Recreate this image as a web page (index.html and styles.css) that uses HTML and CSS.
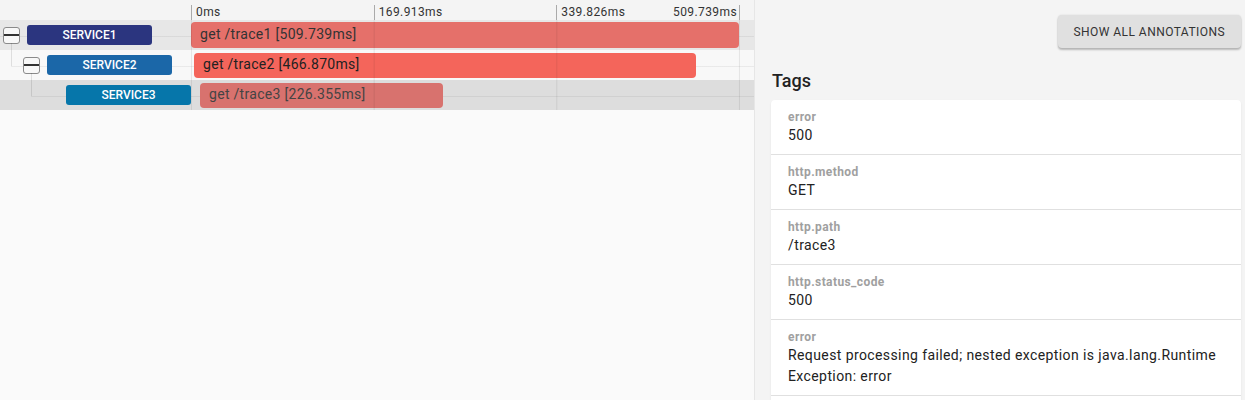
FILE: index.html
```html
<!DOCTYPE html>
<html lang="en">
<head>
  <meta charset="UTF-8" />
  <meta name="viewport" content="width=device-width, initial-scale=1.0"/>
  <title>Trace Detail</title>
  <link rel="stylesheet" href="styles.css">
</head>
<body>

  <div class="layout">

    <section class="timeline">
      <div class="ruler">
        <div class="ruler-space"></div>
        <div class="ruler-ticks">
          <div class="tick"><span>0ms</span></div>
          <div class="tick"><span>169.913ms</span></div>
          <div class="tick"><span>339.826ms</span><span>509.739ms</span></div>
        </div>
      </div>

      <div class="span-row row-selected depth-0">
        <div class="span-label">
          <span class="toggle has-children"></span>
          <span class="service service-1">SERVICE1</span>
        </div>
        <div class="span-track">
          <div class="span-bar bar-1" style="margin-left:0px;width:548px">get /trace1 [509.739ms]</div>
        </div>
      </div>

      <div class="span-row row-light depth-1">
        <div class="span-label">
          <span class="toggle has-children"></span>
          <span class="service service-2">SERVICE2</span>
        </div>
        <div class="span-track">
          <div class="span-bar bar-2" style="margin-left:3px;width:502px">get /trace2 [466.870ms]</div>
        </div>
      </div>

      <div class="span-row row-dark depth-2">
        <div class="span-label">
          <span class="toggle toggle-empty"></span>
          <span class="service service-3">SERVICE3</span>
        </div>
        <div class="span-track">
          <div class="span-bar bar-3" style="margin-left:9px;width:243px">get /trace3 [226.355ms]</div>
        </div>
      </div>
    </section>

    <aside class="detail">
      <div class="detail-actions">
        <button class="btn-annotations">Show all annotations</button>
      </div>

      <h3>Tags</h3>

      <div class="tag-card">
        <div class="tag-item">
          <div class="tag-key">error</div>
          <div class="tag-value">500</div>
        </div>
        <div class="tag-item">
          <div class="tag-key">http.method</div>
          <div class="tag-value">GET</div>
        </div>
        <div class="tag-item">
          <div class="tag-key">http.path</div>
          <div class="tag-value">/trace3</div>
        </div>
        <div class="tag-item">
          <div class="tag-key">http.status_code</div>
          <div class="tag-value">500</div>
        </div>
        <div class="tag-item">
          <div class="tag-key">error</div>
          <div class="tag-value">Request processing failed; nested exception is java.lang.RuntimeException: error</div>
        </div>
      </div>
    </aside>

  </div>

</body>
</html>
```

FILE: styles.css
```css
body {
  margin: 0;
  font-family: Roboto, 'Liberation Sans', Arial, sans-serif;
  color: #222;
  background: #f4f4f4;
  height: 400px;
  overflow: hidden;
}

.layout {
  display: flex;
  height: 400px;
}

/* ---- timeline ---- */

.timeline {
  width: 754px;
  flex-shrink: 0;
  background: #fafafa;
  border-right: 1px solid #e6e6e6;
}

.ruler {
  display: flex;
  height: 20px;
  padding-top: 5px;
  box-sizing: border-box;
  background: #f4f4f4;
}

.ruler-space {
  width: 191px;
  flex-shrink: 0;
}

.ruler-ticks {
  display: grid;
  grid-template-columns: repeat(3, 1fr);
  width: 548px;
  border-right: 1px solid #aaa;
}

.tick {
  display: flex;
  justify-content: space-between;
  border-left: 1px solid #aaa;
  padding: 0 2px 0 4px;
  font-size: 12px;
  letter-spacing: 0.4px;
  line-height: 15px;
  color: #333;
}

.span-row {
  display: flex;
  height: 30px;
  background-repeat: no-repeat;
  background-size: 100% 1px;
  background-image: linear-gradient(rgba(0, 0, 0, 0.06), rgba(0, 0, 0, 0.06));
}

.row-selected { background-color: #e7e7e7; }
.row-light { background-color: #f8f8f8; }
.row-dark { background-color: #dddddd; }

.depth-0 { background-position: 0 16px; }
.depth-1 { background-position: 11px 16px; }
.depth-2 { background-position: 31px 16px; }

.span-label {
  display: flex;
  align-items: center;
  gap: 7px;
  width: 191px;
  flex-shrink: 0;
  box-sizing: border-box;
}

.depth-0 .span-label { padding-left: 3px; }
.depth-1 .span-label { padding-left: 23px; }
.depth-2 .span-label { padding-left: 42px; }

.toggle {
  position: relative;
  width: 17px;
  height: 17px;
  box-sizing: border-box;
  border: 1px solid #8a8a8a;
  border-radius: 3px;
  background: linear-gradient(#333, #333) center / 100% 2px no-repeat, #f8f8f8;
}

.toggle.has-children::after {
  content: '';
  position: absolute;
  left: 7px;
  top: 100%;
  width: 1px;
  height: 23px;
  background: rgba(0, 0, 0, 0.1);
}

.toggle-empty {
  visibility: hidden;
}

.service {
  width: 125px;
  height: 20px;
  border-radius: 3px;
  color: #fff;
  font-size: 12px;
  font-weight: 500;
  line-height: 20px;
  text-align: center;
}

.service-1 { background: #2b357f; }
.service-2 { background: #1b67a8; }
.service-3 { background: #0676aa; }

.span-track {
  position: relative;
  width: 549px;
  flex-shrink: 0;
}

.span-track::after {
  content: '';
  position: absolute;
  top: 0;
  left: 0;
  right: 0;
  bottom: 0;
  pointer-events: none;
  background: linear-gradient(to right, rgba(0, 0, 0, 0.08) 1px, transparent 1px) 0 0 / 182.667px 100% repeat-x;
}

.span-bar {
  height: 26px;
  margin-top: 2px;
  border-radius: 4px;
  padding-left: 9px;
  box-sizing: border-box;
  font-size: 14px;
  letter-spacing: 0.3px;
  line-height: 25px;
  color: #333;
  white-space: nowrap;
  overflow: hidden;
}

.depth-1 .span-bar,
.depth-2 .span-bar {
  margin-top: 3px;
  height: 25px;
  line-height: 23px;
}

.bar-1 { background: #e5706a; }
.bar-2 { background: #f4655b; color: #222; }
.bar-3 { background: #d8726e; color: #444; }

/* ---- detail panel ---- */

.detail {
  flex: 1;
  padding: 15px 4px 0 16px;
  background: #f4f4f4;
}

.detail-actions {
  display: flex;
  justify-content: flex-end;
}

.btn-annotations {
  height: 33px;
  padding: 0 16px;
  border: none;
  border-radius: 4px;
  background: #e0e0e0;
  box-shadow: 0 2px 2px rgba(0, 0, 0, 0.24), 0 0 2px rgba(0, 0, 0, 0.12);
  font-family: Roboto, 'Liberation Sans', Arial, sans-serif;
  font-size: 12px;
  letter-spacing: 0.45px;
  text-transform: uppercase;
  color: #333;
  cursor: pointer;
}

h3 {
  margin: 21px 0 7px 1px;
  font-size: 18px;
  font-weight: 500;
  line-height: 24px;
  color: #222;
}

.tag-card {
  padding-bottom: 12px;
  background: #fff;
  border-radius: 4px;
  box-shadow: 0 1px 2px rgba(0, 0, 0, 0.08);
}

.tag-item {
  padding: 9px 18px 8px 17px;
  border-bottom: 1px solid #e0e0e0;
}

.tag-key {
  font-size: 12px;
  font-weight: 700;
  letter-spacing: 0.4px;
  line-height: 16px;
  color: #a0a0a0;
}

.tag-value {
  font-size: 14px;
  letter-spacing: 0.4px;
  line-height: 21px;
  color: #222;
  word-break: break-all;
}
```
